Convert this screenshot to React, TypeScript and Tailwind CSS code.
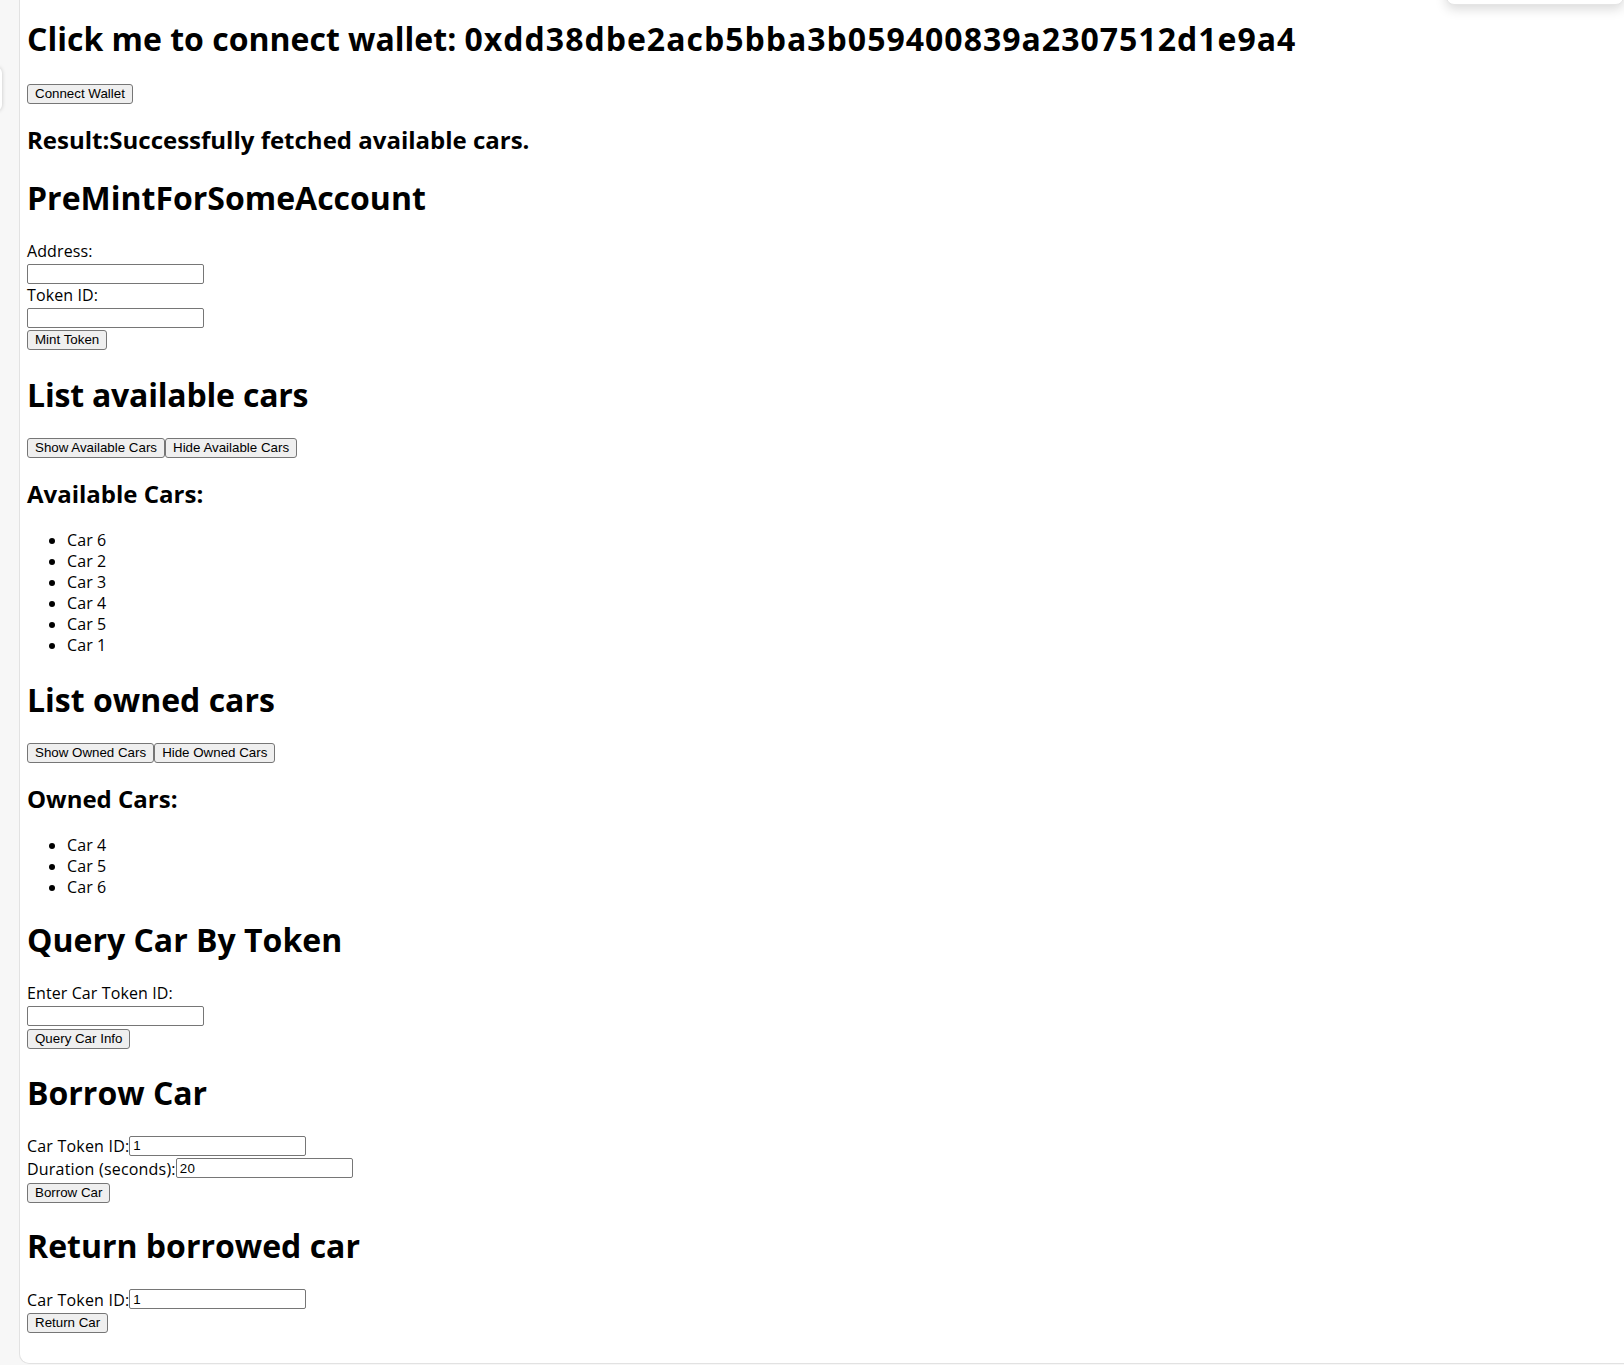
import { useState } from 'react';

const H1 = ({ children, className = '' }: { children: React.ReactNode; className?: string }) => (
  <h1 className={`text-[32px] leading-[42px] font-bold text-black ${className}`}>{children}</h1>
);

const H2 = ({ children, className = '' }: { children: React.ReactNode; className?: string }) => (
  <h2 className={`text-[24px] leading-[32px] font-bold text-black ${className}`}>{children}</h2>
);

const Label = ({ children, className = '' }: { children: React.ReactNode; className?: string }) => (
  <div className={`h-[21px] pt-[1px] text-[16px] leading-[21px] tracking-[0.1px] ${className}`}>{children}</div>
);

const Btn = ({ children, className = '', onClick }: { children: React.ReactNode; className?: string; onClick?: () => void }) => (
  <button
    onClick={onClick}
    className={`h-[20px] px-[7px] border border-[#767676] rounded-[3px] bg-[#efefef] text-[13.333px] leading-[18px] text-black font-['Liberation_Sans',Arial,sans-serif] ${className}`}
  >
    {children}
  </button>
);

const Field = ({ value, onChange, className = '' }: { value: string; onChange: (v: string) => void; className?: string }) => (
  <input
    value={value}
    onChange={(e) => onChange(e.target.value)}
    className={`w-[177px] h-[20px] px-[3px] border border-[#767676] rounded-[2px] bg-white text-[13.333px] text-black font-['Liberation_Sans',Arial,sans-serif] outline-none ${className}`}
  />
);

const CarList = ({ cars, className = '' }: { cars: number[]; className?: string }) => (
  <ul className={`list-disc pl-[40px] text-[16px] leading-[21.1px] tracking-[0.1px] ${className}`}>
    {cars.map((c) => (
      <li key={c}>Car {c}</li>
    ))}
  </ul>
);

const Row = ({ label, value, onChange, className = '' }: { label: string; value: string; onChange: (v: string) => void; className?: string }) => (
  <div className={`flex items-center h-[21px] text-[16px] leading-[21px] tracking-[0.2px] ${className}`}>
    <span className="pt-[2px]">{label}</span>
    <Field value={value} onChange={onChange} />
  </div>
);

export default function App() {
  const [address, setAddress] = useState('');
  const [tokenId, setTokenId] = useState('');
  const [queryId, setQueryId] = useState('');
  const [borrowId, setBorrowId] = useState('1');
  const [duration, setDuration] = useState('20');
  const [returnId, setReturnId] = useState('1');
  const [showAvailable, setShowAvailable] = useState(true);
  const [showOwned, setShowOwned] = useState(true);

  return (
    <div className="relative flex min-h-[1365px] bg-[#f7f7f7] font-['Open_Sans',sans-serif] text-black overflow-hidden">
      {/* side tab peeking at the left edge */}
      <div className="absolute left-[-10px] top-[67px] w-[12px] h-[44px] rounded-[6px] bg-white shadow-[0_0_4px_rgba(0,0,0,0.2)]" />

      <div className="w-[19px] shrink-0" />

      <main className="flex-1 h-[1364px] bg-white border-l border-b border-[#e2e2e2] rounded-bl-[10px] pl-[7px] pt-[18px] flex flex-col items-start">
        <H1>
          Click me to connect wallet: <span className="tracking-[1px]">0xdd38dbe2acb5bba3b059400839a2307512d1e9a4</span>
        </H1>
        <Btn className="mt-[24px]">Connect Wallet</Btn>

        <H2 className="mt-[20px]">Result:Successfully fetched available cars.</H2>

        <H1 className="mt-[21px]">PreMintForSomeAccount</H1>
        <Label className="mt-[21px]">Address:</Label>
        <Field className="mt-[3px]" value={address} onChange={setAddress} />
        <Label>Token ID:</Label>
        <Field className="mt-[2.5px]" value={tokenId} onChange={setTokenId} />
        <Btn className="mt-[2.5px]">Mint Token</Btn>

        <H1 className="mt-[24px] tracking-[-0.2px]">List available cars</H1>
        <div className="mt-[22px] flex">
          <Btn onClick={() => setShowAvailable(true)}>Show Available Cars</Btn>
          <Btn onClick={() => setShowAvailable(false)}>Hide Available Cars</Btn>
        </div>
        {showAvailable && (
          <>
            <H2 className="mt-[20px]">Available Cars:</H2>
            <CarList className="mt-[20px]" cars={[6, 2, 3, 4, 5, 1]} />
          </>
        )}

        <H1 className="mt-[22px]">List owned cars</H1>
        <div className="mt-[22px] flex">
          <Btn onClick={() => setShowOwned(true)}>Show Owned Cars</Btn>
          <Btn onClick={() => setShowOwned(false)}>Hide Owned Cars</Btn>
        </div>
        {showOwned && (
          <>
            <H2 className="mt-[20px]">Owned Cars:</H2>
            <CarList className="mt-[20.5px]" cars={[4, 5, 6]} />
          </>
        )}

        <H1 className="mt-[21px]">Query Car By Token</H1>
        <Label className="mt-[21px]">Enter Car Token ID:</Label>
        <Field className="mt-[3px]" value={queryId} onChange={setQueryId} />
        <Btn className="mt-[3px]">Query Car Info</Btn>

        <H1 className="mt-[22.5px]">Borrow Car</H1>
        <Row className="mt-[21.5px]" label="Car Token ID:" value={borrowId} onChange={setBorrowId} />
        <Row className="mt-[1.5px]" label="Duration (seconds):" value={duration} onChange={setDuration} />
        <Btn className="mt-[4px]">Borrow Car</Btn>

        <H1 className="mt-[22.5px]">Return borrowed car</H1>
        <Row className="mt-[21.5px]" label="Car Token ID:" value={returnId} onChange={setReturnId} />
        <Btn className="mt-[3.5px]">Return Car</Btn>
      </main>

      {/* dropdown panel peeking from the top right */}
      <div className="absolute right-0 top-[-20px] w-[178px] h-[25px] rounded-[8px] bg-white border border-[#e5e5e5] shadow-[0_4px_12px_rgba(0,0,0,0.15)]" />
    </div>
  );
}
